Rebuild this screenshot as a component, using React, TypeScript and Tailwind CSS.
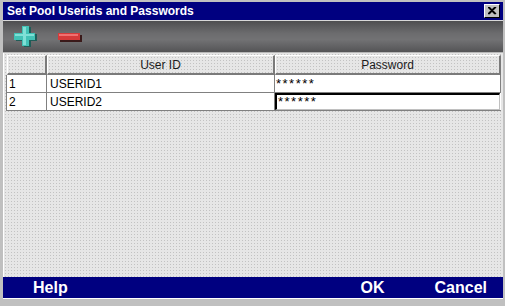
import { FC } from 'react'

const dotted =
  'bg-[#e6e6e6] bg-[radial-gradient(circle,#c2c2c2_0.6px,transparent_0.7px)] bg-[length:3px_3px]'

const PlusIcon: FC = () => (
  <svg width="26" height="24" viewBox="0 0 26 24">
    <rect x="11" y="2" width="7" height="20" fill="#1f5d58" />
    <rect x="3" y="9" width="21" height="7" fill="#1f5d58" />
    <rect x="9" y="1" width="7" height="20" fill="#42c2b6" />
    <rect x="1" y="8" width="21" height="7" fill="#42c2b6" />
    <rect x="10" y="2" width="3" height="18" fill="#7fe0d6" />
    <rect x="2" y="9" width="19" height="2" fill="#7fe0d6" />
  </svg>
)

const MinusIcon: FC = () => (
  <svg width="26" height="12" viewBox="0 0 26 12">
    <rect x="3" y="3" width="22" height="7" fill="#3a1a1a" />
    <rect x="1" y="1" width="22" height="7" fill="#d53a3a" />
    <rect x="2" y="2" width="19" height="2" fill="#f07070" />
  </svg>
)

const HeaderCell: FC<{ label?: string; className?: string }> = ({ label, className }) => (
  <div
    className={`${dotted} ${className ?? ''} flex h-[20px] items-center justify-center border-t border-l border-t-white border-l-white border-b-2 border-r-2 border-b-[#7a7a7a] border-r-[#7a7a7a] text-[12px] text-[#1a1a1a]`}
  >
    {label}
  </div>
)

const rows = [
  { n: '1', id: 'USERID1', pw: '******', editing: false },
  { n: '2', id: 'USERID2', pw: '******', editing: true }
]

const App: FC = () => {
  return (
    <div
      className="flex h-[306px] w-[505px] flex-col overflow-hidden bg-[#c0c0c0] pt-[2px] pl-[3px] pr-[2px]"
      style={{ fontFamily: '"Liberation Sans", Arial, sans-serif' }}
    >
      <div className="flex h-[18px] items-center justify-between bg-[#000080] pl-[4px] pr-[3px]">
        <span className="text-[12px] font-bold text-white">Set Pool Userids and Passwords</span>
        <div className="flex h-[14px] w-[16px] items-center justify-center border border-t-white border-l-white border-b-black border-r-black bg-[#c0c0c0]">
          <svg width="9" height="8" viewBox="0 0 9 8">
            <path d="M1 0 L8 7 M0 0 L7 7 M8 0 L1 7 M7 0 L0 7" stroke="#000" strokeWidth="1.3" />
          </svg>
        </div>
      </div>

      <div className="flex h-[33px] items-center gap-[18px] border-t border-b border-t-[#d8d8d8] border-b-[#b8b8b8] bg-[linear-gradient(180deg,#4e4e50_0%,#6c6c6e_40%,#727274_60%,#545456_100%)] pl-[10px]">
        <PlusIcon />
        <div className="mt-[3px]">
          <MinusIcon />
        </div>
      </div>

      <div className={`${dotted} flex-1 border-l border-l-white pl-[2px] pt-[2px]`}>
        <div className="grid grid-cols-[41px_228px_226px]">
          <HeaderCell className="ml-[1px]" />
          <HeaderCell label="User ID" />
          <HeaderCell label="Password" />
          {rows.map(r => (
            <div key={r.n} className="contents">
              <div className="flex h-[18px] items-center border-b border-r border-l border-[#808080] bg-white pl-[2px] text-[12px] text-black">
                {r.n}
              </div>
              <div className="flex h-[18px] items-center border-b border-r border-[#808080] bg-white pl-[3px] text-[12px] text-black">
                {r.id}
              </div>
              {r.editing ? (
                <div className="flex h-[18px] items-center border-b border-[#808080] bg-white pr-[1px]">
                  <div className="flex h-full flex-1 items-center border-t-2 border-l-2 border-b border-r border-t-black border-l-black border-b-[#c0c0c0] border-r-[#c0c0c0] pl-[1px] text-[13px] tracking-[1.5px] text-black">
                    {r.pw}
                  </div>
                </div>
              ) : (
                <div className="flex h-[18px] items-center border-b border-r border-[#808080] bg-white pl-[1px] text-[13px] tracking-[1.5px] text-black">
                  {r.pw}
                </div>
              )}
            </div>
          ))}
        </div>
      </div>

      <div className="flex h-[21px] items-center bg-[#000080] text-[16px] font-bold text-white">
        <span className="ml-[30px]">Help</span>
        <span className="ml-auto">OK</span>
        <span className="mr-[16px] ml-[50px]">Cancel</span>
      </div>
      <div className="h-[8px] border-t border-t-white bg-[#c0c0c0]" />
    </div>
  )
}

export default App
